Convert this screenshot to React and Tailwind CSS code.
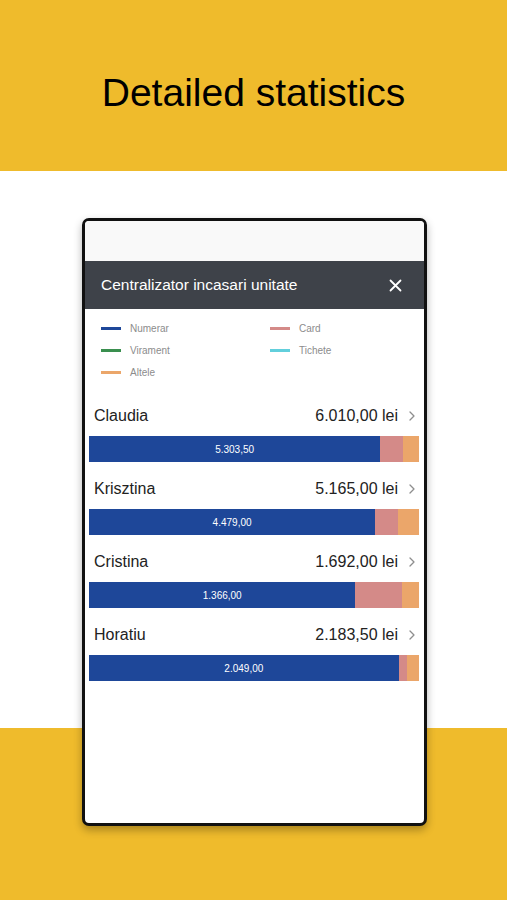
import React from 'react';

const legend = [
  { label: 'Numerar', color: 'bg-[#1e4799]' },
  { label: 'Card', color: 'bg-[#d48a88]' },
  { label: 'Virament', color: 'bg-[#3a8f4f]' },
  { label: 'Tichete', color: 'bg-[#62cfdc]' },
  { label: 'Altele', color: 'bg-[#eba66a]' },
];

const people = [
  { name: 'Claudia', total: '6.010,00 lei', numerar: 5303.5, numerarLabel: '5.303,50', card: 420, altele: 286.5 },
  { name: 'Krisztina', total: '5.165,00 lei', numerar: 4479, numerarLabel: '4.479,00', card: 360, altele: 326 },
  { name: 'Cristina', total: '1.692,00 lei', numerar: 1366, numerarLabel: '1.366,00', card: 241, altele: 85 },
  { name: 'Horatiu', total: '2.183,50 lei', numerar: 2049, numerarLabel: '2.049,00', card: 53, altele: 81.5 },
];

const PersonRow = ({ p }) => {
  const sum = p.numerar + p.card + p.altele;
  const pct = (v) => `${(v / sum) * 100}%`;
  return (
    <div className="mb-[17px]">
      <div className="flex items-center h-[20px] pl-[9px] pr-[8px]">
        <span className="text-[16px] text-[#222] flex-1">{p.name}</span>
        <span className="text-[16px] text-[#222]">{p.total}</span>
        <svg width="8" height="12" viewBox="0 0 8 12" className="ml-[10px]">
          <path d="M2 2l4 4-4 4" fill="none" stroke="#8e8e8e" strokeWidth="1.3" strokeLinecap="round" strokeLinejoin="round" />
        </svg>
      </div>
      <div className="flex h-[26px] mt-[10px] ml-[4px] mr-[5px]">
        <div className="bg-[#1e4799] flex items-center justify-center text-white text-[10px]" style={{ width: pct(p.numerar) }}>
          {p.numerarLabel}
        </div>
        <div className="bg-[#d48a88]" style={{ width: pct(p.card) }} />
        <div className="bg-[#eba66a]" style={{ width: pct(p.altele) }} />
      </div>
    </div>
  );
};

export default function App() {
  return (
    <div
      className="w-[507px] h-[900px] overflow-hidden bg-[linear-gradient(to_bottom,#efbb2c_0px,#efbb2c_171px,#ffffff_171px,#ffffff_728px,#efbb2c_728px)]"
      style={{ fontFamily: '"Liberation Sans", Arial, sans-serif' }}
    >
      <div className="h-[171px] flex items-center justify-center pt-[13px]">
        <h1 className="text-[39px] text-black leading-none">Detailed statistics</h1>
      </div>

      <div className="mt-[47px] ml-[82px] w-[345px] h-[608px] border-[3px] border-[#111] rounded-[7px] bg-white overflow-hidden shadow-[0_4px_8px_rgba(0,0,0,0.3)]">
        <div className="h-[40px] bg-[#f9f9f9]" />
        <div className="h-[48px] bg-[#3e4249] flex items-center justify-between pl-[16px] pr-[22px]">
          <span className="text-white text-[15.5px]">Centralizator incasari unitate</span>
          <svg width="13" height="13" viewBox="0 0 13 13">
            <path d="M1.5 1.5l10 10M11.5 1.5l-10 10" stroke="#fff" strokeWidth="1.8" strokeLinecap="round" />
          </svg>
        </div>

        <div className="grid grid-cols-[169px_1fr] pt-[8px] pl-[16px]">
          {legend.map((l) => (
            <div key={l.label} className="flex items-center h-[22px]">
              <span className={`w-[20px] h-[3px] ${l.color}`} />
              <span className="ml-[9px] text-[10px] text-[#8c8c8c]">{l.label}</span>
            </div>
          ))}
        </div>

        <div className="mt-[23px]">
          {people.map((p) => (
            <PersonRow key={p.name} p={p} />
          ))}
        </div>
      </div>
    </div>
  );
}
